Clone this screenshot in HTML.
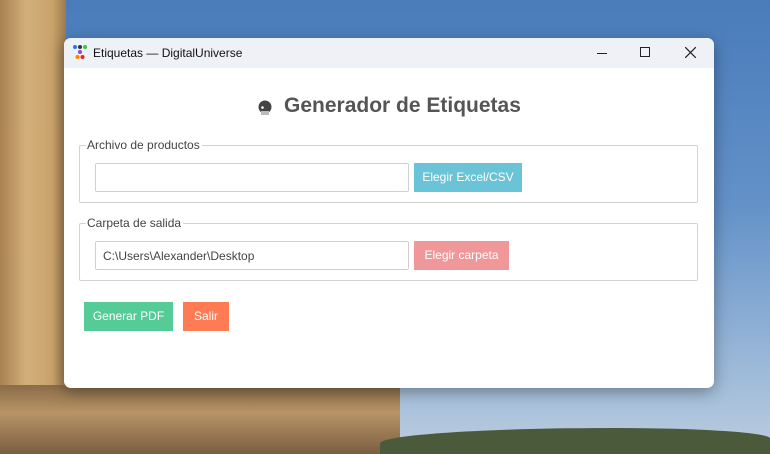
<!DOCTYPE html>
<html><head><meta charset="utf-8"><style>
*{box-sizing:border-box;margin:0;padding:0}
body{width:770px;height:454px;overflow:hidden;position:relative;font-family:"Liberation Sans",sans-serif;
background:linear-gradient(180deg,#4a7cba 0%,#6391c8 45%,#9ab8d8 80%,#bccddf 100%)}
.tower{position:absolute;left:0;top:0;width:66px;height:454px;background:linear-gradient(90deg,#a98152,#d3b07a 40%,#c9a26a 80%,#9c7a4e)}
.bot{position:absolute;left:0;top:385px;width:400px;height:69px;background:linear-gradient(180deg,#8a6c48,#b89466 40%,#7a5e40)}
.hill{position:absolute;left:380px;top:428px;width:390px;height:26px;background:#4a5a3a;border-radius:60% 40% 0 0}
.win{position:absolute;left:64px;top:38px;width:650px;height:350px;background:#fff;border-radius:7px;overflow:hidden;box-shadow:0 4px 16px rgba(0,0,0,.35)}
.tb{height:30px;background:#eef2f6;position:relative;font-size:12px;color:#111}
.tb .t{position:absolute;left:29px;top:8px}
h1{position:absolute;left:220px;top:56px;font-size:21px;font-weight:bold;color:#555;white-space:nowrap}
.fs{position:absolute;left:15px;width:619px;height:58px;border:1px solid #d0d4d8;border-radius:2px}
.lg{position:absolute;left:6px;top:-8px;background:#fff;font-size:12px;color:#444;padding:0 2px 0 1px}
.in{position:absolute;left:15px;top:17px;width:314px;height:29px;border:1px solid #d0d0d0;border-radius:2px;font-size:12px;color:#444;padding:7px 7px}
.bt{position:absolute;top:17px;height:29px;color:#fff;font-size:12px;text-align:center;line-height:29px}
.b2{position:absolute;top:264px;height:29px;color:#fff;font-size:12px;text-align:center;line-height:29px}
</style></head><body>
<div class="tower"></div><div class="bot"></div><div class="hill"></div>
<div class="win">
 <div class="tb">
  <svg style="position:absolute;left:9px;top:7px" width="14" height="14"><circle cx="2" cy="2" r="2" fill="#1e7bf0"/><circle cx="7" cy="2" r="2" fill="#333"/><circle cx="12" cy="2" r="2" fill="#3c3"/><circle cx="7" cy="7" r="2" fill="#a040d0"/><circle cx="4.5" cy="12" r="2" fill="#f80"/><circle cx="9.5" cy="12" r="2" fill="#e22"/></svg>
  <span class="t">Etiquetas — DigitalUniverse</span>
  <div style="position:absolute;left:533px;top:15px;width:10px;height:1px;background:#222"></div>
  <div style="position:absolute;left:576px;top:9px;width:10px;height:10px;border:1px solid #222"></div>
  <svg style="position:absolute;left:621px;top:9px" width="11" height="11"><path d="M0 0L11 11M11 0L0 11" stroke="#222" stroke-width="1.2"/></svg>
 </div>
 <svg style="position:absolute;left:194px;top:62px" width="14" height="15"><circle cx="7" cy="7" r="6.5" fill="#444"/><rect x="3" y="11" width="8" height="4" fill="#bbb"/><circle cx="4.5" cy="7.5" r="1.3" fill="#fff"/></svg>
 <h1>Generador de Etiquetas</h1>
 <div class="fs" style="top:107px"><span class="lg">Archivo de productos</span>
  <div class="in"></div><div class="bt" style="left:334px;width:108px;background:#6ac3d6">Elegir Excel/CSV</div></div>
 <div class="fs" style="top:185px"><span class="lg">Carpeta de salida</span>
  <div class="in">C:\Users\Alexander\Desktop</div><div class="bt" style="left:334px;width:95px;background:#f0979a">Elegir carpeta</div></div>
 <div class="b2" style="left:20px;width:89px;background:#55cc98">Generar PDF</div>
 <div class="b2" style="left:119px;width:46px;background:#ff7b53">Salir</div>
</div>
</body></html>
